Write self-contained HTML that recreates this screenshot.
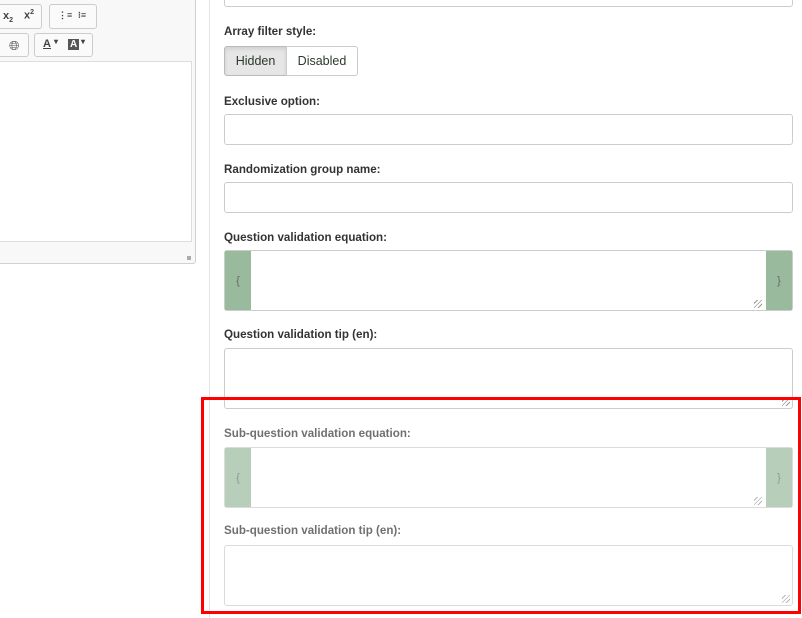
<!DOCTYPE html>
<html><head><style>
body{margin:0;width:802px;height:618px;background:#fff;font-family:"Liberation Sans",sans-serif;position:relative;overflow:hidden;color:#333}
.a{position:absolute;box-sizing:border-box}
.lbl{position:absolute;left:224px;font-size:11.6px;font-weight:bold;color:#333}
.inp{position:absolute;left:224px;width:569px;border:1px solid #ccc;border-radius:3px;box-sizing:border-box;background:#fff}
.addon{position:absolute;top:0;bottom:0;width:26px;background:#9aba9d;color:#666;font-size:11px;display:flex;align-items:center;justify-content:center}
.grip{position:absolute;right:2px;bottom:2px;width:8px;height:8px;background:repeating-linear-gradient(135deg,transparent 0 2px,#999 2px 3px)}
.tb{position:absolute;border:1px solid #ccc;border-radius:3px;background:#fafafa;box-sizing:border-box;font-size:11px;color:#444;font-weight:bold}
.dim{opacity:.7}
</style></head><body>
<div class="a" style="left:-3px;top:-3px;width:199px;height:267px;border:1px solid #d1d1d1;border-radius:3px;background:#f8f8f8"></div>
<div class="tb" style="left:-5px;top:4px;width:47px;height:25px"><span style="position:absolute;left:7px;top:5px">x<sub style="font-size:7px">2</sub></span><span style="position:absolute;left:28px;top:4px">x<sup style="font-size:7px">2</sup></span></div>
<div class="tb" style="left:49px;top:4px;width:48px;height:25px"><span style="position:absolute;left:8px;top:5px;font-size:9px">⋮≡</span><span style="position:absolute;left:28px;top:5px;font-size:9px">⁝≡</span></div>
<div class="tb" style="left:-5px;top:33px;width:34px;height:24px"><span style="position:absolute;left:13px;top:4px;font-size:13px;font-weight:normal">🌐︎</span></div>
<div class="tb" style="left:34px;top:33px;width:59px;height:24px"><span style="position:absolute;left:8px;top:4px;text-decoration:underline">A</span><span style="position:absolute;left:19px;top:3px;font-size:8px">▾</span><span style="position:absolute;left:33px;top:5px;background:#555;color:#fff;padding:0 2px;font-size:10px">A</span><span style="position:absolute;left:46px;top:3px;font-size:8px">▾</span></div>
<div class="a" style="left:-3px;top:61px;width:195px;height:181px;border:1px solid #ddd;background:#fff"></div>
<div class="a" style="left:187px;top:256px;width:4px;height:4px;background:#aaa"></div>
<div class="a" style="left:209px;top:0;width:1px;height:618px;background:#e5e5e5"></div>
<div class="inp" style="top:-10px;height:17px"></div>
<div class="lbl" style="top:25px">Array filter style:</div>
<div class="a" style="left:224px;top:46px;width:63px;height:30px;border:1px solid #bbb;border-radius:3px 0 0 3px;background:#e6e6e6;box-shadow:inset 0 2px 4px rgba(0,0,0,.1);font-size:12.5px;line-height:28px;text-align:center;color:#2a3a2a">Hidden</div>
<div class="a" style="left:286px;top:46px;width:72px;height:30px;border:1px solid #ccc;border-radius:0 3px 3px 0;font-size:12.5px;line-height:28px;text-align:center;color:#2a3a2a">Disabled</div>
<div class="lbl" style="top:95px">Exclusive option:</div>
<div class="inp" style="top:114px;height:31px"></div>
<div class="lbl" style="top:163px">Randomization group name:</div>
<div class="inp" style="top:182px;height:31px"></div>
<div class="lbl" style="top:231px">Question validation equation:</div>
<div class="inp" style="top:250px;height:61px"><div class="addon" style="left:0">{</div><div class="addon" style="right:0">}</div><div class="grip" style="right:30px"></div></div>
<div class="lbl" style="top:328px">Question validation tip (en):</div>
<div class="inp" style="top:348px;height:61px"><div class="grip"></div></div>
<div class="dim">
<div class="lbl" style="top:427px">Sub-question validation equation:</div>
<div class="inp" style="top:447px;height:61px"><div class="addon" style="left:0">{</div><div class="addon" style="right:0">}</div><div class="grip" style="right:30px"></div></div>
<div class="lbl" style="top:524px">Sub-question validation tip (en):</div>
<div class="inp" style="top:545px;height:61px"><div class="grip"></div></div>
</div>
<div class="a" style="left:201px;top:397px;width:600px;height:217px;border:3px solid #f00"></div>
</body></html>
